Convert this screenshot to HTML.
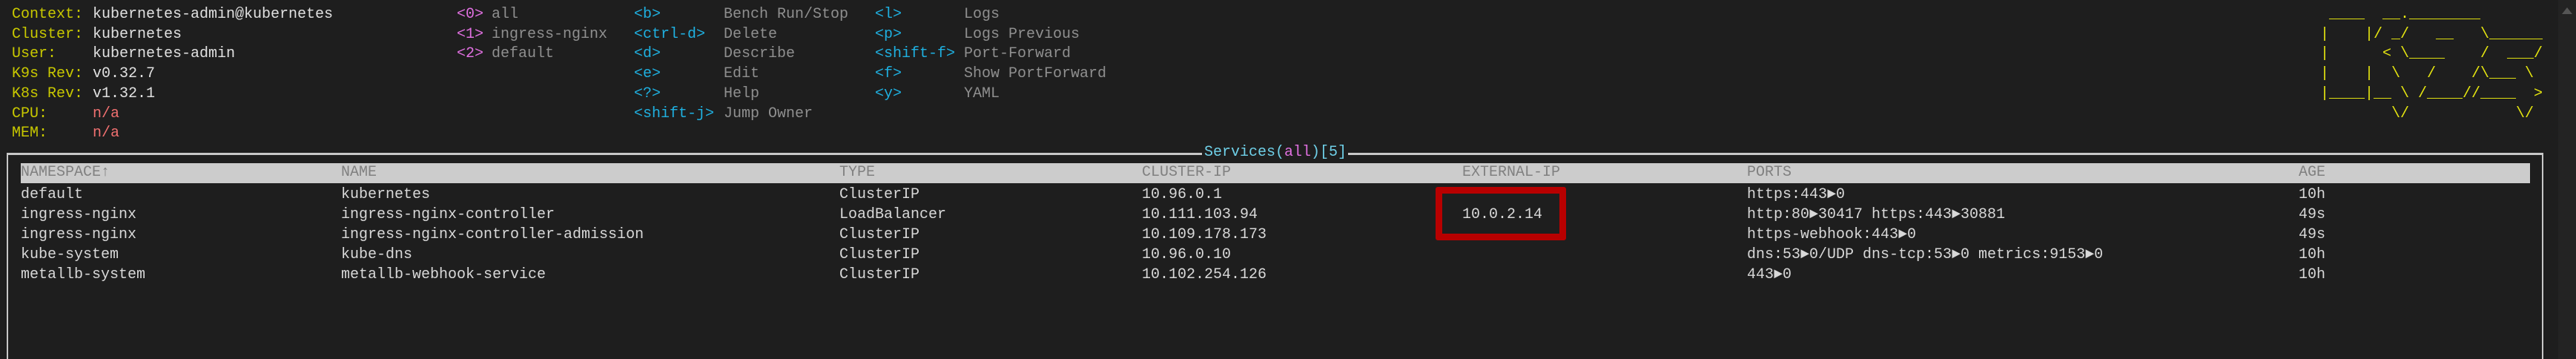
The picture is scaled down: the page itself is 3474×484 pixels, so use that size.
<!DOCTYPE html>
<html><head><meta charset="utf-8"><style>
html,body{margin:0;padding:0;background:#1e1e1e;width:3474px;height:484px;overflow:hidden;position:relative}
.t{position:absolute;font-family:"Liberation Mono",monospace;font-size:20px;line-height:26.7px;white-space:pre;height:26.7px}
.y{color:#c8c800}.w{color:#e0e0e0}.r{color:#f07070}.m{color:#e070e0}.g{color:#8f8f8f}.c{color:#1fb0e0}.l{color:#e5e510}.d{color:#d8d8d8}.h{color:#808080}
</style></head><body>
<div class="t y" style="left:16px;top:7px">Context:</div><div class="t w" style="left:125px;top:7px">kubernetes-admin@kubernetes</div>
<div class="t y" style="left:16px;top:33.7px">Cluster:</div><div class="t w" style="left:125px;top:33.7px">kubernetes</div>
<div class="t y" style="left:16px;top:60.4px">User:</div><div class="t w" style="left:125px;top:60.4px">kubernetes-admin</div>
<div class="t y" style="left:16px;top:87.1px">K9s Rev:</div><div class="t w" style="left:125px;top:87.1px">v0.32.7</div>
<div class="t y" style="left:16px;top:113.8px">K8s Rev:</div><div class="t w" style="left:125px;top:113.8px">v1.32.1</div>
<div class="t y" style="left:16px;top:140.5px">CPU:</div><div class="t r" style="left:125px;top:140.5px">n/a</div>
<div class="t y" style="left:16px;top:167.2px">MEM:</div><div class="t r" style="left:125px;top:167.2px">n/a</div>

<div class="t m" style="left:616px;top:7px">&lt;0&gt;</div><div class="t g" style="left:663px;top:7px">all</div>
<div class="t m" style="left:616px;top:33.7px">&lt;1&gt;</div><div class="t g" style="left:663px;top:33.7px">ingress-nginx</div>
<div class="t m" style="left:616px;top:60.4px">&lt;2&gt;</div><div class="t g" style="left:663px;top:60.4px">default</div>

<div class="t c" style="left:855px;top:7px">&lt;b&gt;</div><div class="t g" style="left:976px;top:7px">Bench Run/Stop</div>
<div class="t c" style="left:855px;top:33.7px">&lt;ctrl-d&gt;</div><div class="t g" style="left:976px;top:33.7px">Delete</div>
<div class="t c" style="left:855px;top:60.4px">&lt;d&gt;</div><div class="t g" style="left:976px;top:60.4px">Describe</div>
<div class="t c" style="left:855px;top:87.1px">&lt;e&gt;</div><div class="t g" style="left:976px;top:87.1px">Edit</div>
<div class="t c" style="left:855px;top:113.8px">&lt;?&gt;</div><div class="t g" style="left:976px;top:113.8px">Help</div>
<div class="t c" style="left:855px;top:140.5px">&lt;shift-j&gt;</div><div class="t g" style="left:976px;top:140.5px">Jump Owner</div>

<div class="t c" style="left:1180px;top:7px">&lt;l&gt;</div><div class="t g" style="left:1300px;top:7px">Logs</div>
<div class="t c" style="left:1180px;top:33.7px">&lt;p&gt;</div><div class="t g" style="left:1300px;top:33.7px">Logs Previous</div>
<div class="t c" style="left:1180px;top:60.4px">&lt;shift-f&gt;</div><div class="t g" style="left:1300px;top:60.4px">Port-Forward</div>
<div class="t c" style="left:1180px;top:87.1px">&lt;f&gt;</div><div class="t g" style="left:1300px;top:87.1px">Show PortForward</div>
<div class="t c" style="left:1180px;top:113.8px">&lt;y&gt;</div><div class="t g" style="left:1300px;top:113.8px">YAML</div>

<div class="t l" style="left:3129px;top:7px"> ____  __.________</div>
<div class="t l" style="left:3129px;top:33.7px">|    |/ _/   __   \______</div>
<div class="t l" style="left:3129px;top:60.4px">|      &lt; \____    /  ___/</div>
<div class="t l" style="left:3129px;top:87.1px">|    |  \   /    /\___ \</div>
<div class="t l" style="left:3129px;top:113.8px">|____|__ \ /____//____  &gt;</div>
<div class="t l" style="left:3129px;top:140.5px">        \/            \/</div>

<div style="position:absolute;left:3450px;top:0;width:24px;height:484px;background:#232323"></div>
<div style="position:absolute;left:3455px;top:10px;width:0;height:0;border-left:7px solid transparent;border-right:7px solid transparent;border-bottom:9px solid #555"></div>

<div style="position:absolute;left:9px;top:206px;width:1612px;height:3px;background:#c8c8c8"></div>
<div style="position:absolute;left:1818px;top:206px;width:1612px;height:3px;background:#c8c8c8"></div>
<div style="position:absolute;left:9px;top:206px;width:2px;height:278px;background:#c8c8c8"></div>
<div style="position:absolute;left:3428px;top:206px;width:2px;height:278px;background:#c8c8c8"></div>
<div class="t" style="left:1624px;top:193px"><span style="color:#6fd0e8">Services(</span><span class="m">all</span><span style="color:#6fd0e8">)[5]</span></div>

<div style="position:absolute;left:28px;top:220px;width:3384px;height:27px;background:#cccccc"></div>
<div class="t h" style="left:28px;top:220px">NAMESPACE↑</div>
<div class="t h" style="left:460px;top:220px">NAME</div>
<div class="t h" style="left:1132px;top:220px">TYPE</div>
<div class="t h" style="left:1540px;top:220px">CLUSTER-IP</div>
<div class="t h" style="left:1972px;top:220px">EXTERNAL-IP</div>
<div class="t h" style="left:2356px;top:220px">PORTS</div>
<div class="t h" style="left:3100px;top:220px">AGE</div>

<div class="t d" style="left:28px;top:250px">default</div><div class="t d" style="left:460px;top:250px">kubernetes</div><div class="t d" style="left:1132px;top:250px">ClusterIP</div><div class="t d" style="left:1540px;top:250px">10.96.0.1</div><div class="t d" style="left:2356px;top:250px">https:443►0</div><div class="t d" style="left:3100px;top:250px">10h</div>
<div class="t d" style="left:28px;top:277px">ingress-nginx</div><div class="t d" style="left:460px;top:277px">ingress-nginx-controller</div><div class="t d" style="left:1132px;top:277px">LoadBalancer</div><div class="t d" style="left:1540px;top:277px">10.111.103.94</div><div class="t d" style="left:1972px;top:277px">10.0.2.14</div><div class="t d" style="left:2356px;top:277px">http:80►30417 https:443►30881</div><div class="t d" style="left:3100px;top:277px">49s</div>
<div class="t d" style="left:28px;top:304px">ingress-nginx</div><div class="t d" style="left:460px;top:304px">ingress-nginx-controller-admission</div><div class="t d" style="left:1132px;top:304px">ClusterIP</div><div class="t d" style="left:1540px;top:304px">10.109.178.173</div><div class="t d" style="left:2356px;top:304px">https-webhook:443►0</div><div class="t d" style="left:3100px;top:304px">49s</div>
<div class="t d" style="left:28px;top:331px">kube-system</div><div class="t d" style="left:460px;top:331px">kube-dns</div><div class="t d" style="left:1132px;top:331px">ClusterIP</div><div class="t d" style="left:1540px;top:331px">10.96.0.10</div><div class="t d" style="left:2356px;top:331px">dns:53►0/UDP dns-tcp:53►0 metrics:9153►0</div><div class="t d" style="left:3100px;top:331px">10h</div>
<div class="t d" style="left:28px;top:358px">metallb-system</div><div class="t d" style="left:460px;top:358px">metallb-webhook-service</div><div class="t d" style="left:1132px;top:358px">ClusterIP</div><div class="t d" style="left:1540px;top:358px">10.102.254.126</div><div class="t d" style="left:2356px;top:358px">443►0</div><div class="t d" style="left:3100px;top:358px">10h</div>

<div style="position:absolute;left:1936px;top:252px;width:158px;height:54px;border:9px solid #b80000;border-radius:3px"></div>
</body></html>
